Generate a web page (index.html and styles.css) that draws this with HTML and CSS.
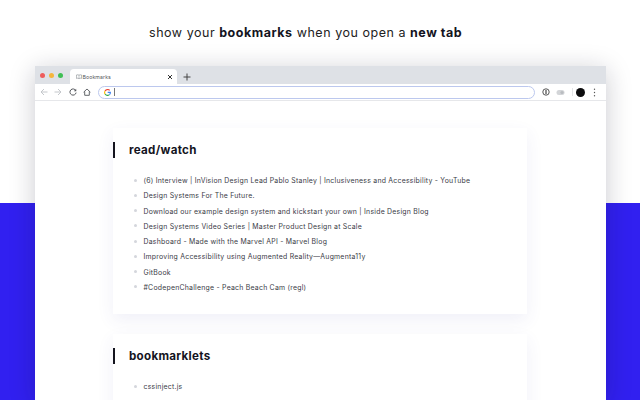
FILE: index.html
```html
<!DOCTYPE html>
<html lang="en">
<head>
<meta charset="utf-8">
<title>Bookmarks</title>
<link rel="stylesheet" href="styles.css">
</head>
<body>
<h1 class="headline">show your <b>bookmarks</b> when you open a <b>new tab</b></h1>
<div class="browser">
  <div class="tabstrip">
    <div class="lights"><i class="light red"></i><i class="light amber"></i><i class="light green"></i></div>
    <div class="tab">
      <svg class="tab-icon" viewBox="0 0 8 6" width="6" height="5"><path d="M.5 1c1-.4 2.400-.4 3.500.2C5.100.6 6.500.6 7.500 1v4.500C6.500 5.100 5.100 5.100 4 5.700 2.900 5.100 1.500 5.100.5 5.500z" fill="none" stroke="#80868b" stroke-width=".8"/><path d="M4 1.200v4.500" stroke="#80868b" stroke-width=".6"/></svg>
      <span class="tab-title">Bookmarks</span>
      <svg class="tab-close" viewBox="0 0 6 6" width="6" height="6"><path d="M1 1l4 4M5 1L1 5" stroke="#333" stroke-width="1"/></svg>
    </div>
    <svg class="new-tab" viewBox="0 0 8 8" width="8" height="8"><path d="M4 .5v7M.5 4h7" stroke="#444" stroke-width="1"/></svg>
  </div>
  <div class="toolbar">
    <svg class="tool" viewBox="0 0 8 8" width="8" height="8"><path d="M7.500 4H1M4 1L1 4l3 3" fill="none" stroke="#c4c7cb" stroke-width="1"/></svg>
    <svg class="tool" viewBox="0 0 8 8" width="8" height="8"><path d="M.5 4H7M4 1l3 3-3 3" fill="none" stroke="#c4c7cb" stroke-width="1"/></svg>
    <svg class="tool" viewBox="0 0 8 8" width="8" height="8"><path d="M6.800 2.600A3.100 3.100 0 1 0 7.100 4.600" fill="none" stroke="#55585c" stroke-width="1"/><path d="M7.200.8v2.400H4.800z" fill="#55585c"/></svg>
    <svg class="tool" viewBox="0 0 8 8" width="8" height="8"><path d="M.6 4.200L4 1l3.400 3.200M1.700 3.500v3.800h4.600V3.500" fill="none" stroke="#55585c" stroke-width=".9"/></svg>
    <div class="omnibox">
      <svg class="g" viewBox="0 0 8 8" width="7" height="7"><path d="M6.500 1.700A3.300 3.300 0 0 0 1.200 2.300" fill="none" stroke="#ea4335" stroke-width="1.300"/><path d="M1.200 2.300a3.300 3.300 0 0 0 0 3.400" fill="none" stroke="#fbbc05" stroke-width="1.300"/><path d="M1.200 5.700a3.300 3.300 0 0 0 5 .8" fill="none" stroke="#34a853" stroke-width="1.300"/><path d="M6.200 6.500A3.300 3.300 0 0 0 7.300 3.800H4.200" fill="none" stroke="#4285f4" stroke-width="1.300"/></svg>
      <i class="caret"></i>
    </div>
    <svg class="ext" viewBox="0 0 8 8" width="8" height="8"><circle cx="4" cy="4" r="3.200" fill="none" stroke="#444" stroke-width=".9"/><path d="M4 2v4" stroke="#444" stroke-width="1.200"/></svg>
    <svg class="ext-second" viewBox="0 0 9 7" width="9" height="7"><rect x=".5" y="1" width="8" height="5" rx="2.500" fill="#d3d5d8"/><circle cx="6" cy="3.500" r="1.600" fill="#b9bcc0"/></svg>
    <i class="divider"></i>
    <i class="avatar"></i>
    <svg class="menu" viewBox="0 0 3 9" width="3" height="9"><circle cx="1.500" cy="1.300" r=".7" fill="#555"/><circle cx="1.500" cy="4.500" r=".7" fill="#555"/><circle cx="1.500" cy="7.700" r=".7" fill="#555"/></svg>
  </div>
  <main class="page">
    <section class="card">
      <h2 class="card-title">read/watch</h2>
      <ul class="links">
        <li>(6) Interview | InVision Design Lead Pablo Stanley | Inclusiveness and Accessibility - YouTube</li>
        <li>Design Systems For The Future.</li>
        <li>Download our example design system and kickstart your own | Inside Design Blog</li>
        <li>Design Systems Video Series | Master Product Design at Scale</li>
        <li>Dashboard - Made with the Marvel API - Marvel Blog</li>
        <li>Improving Accessibility using Augmented Reality—Augmenta11y</li>
        <li>GitBook</li>
        <li>#CodepenChallenge - Peach Beach Cam (regl)</li>
      </ul>
    </section>
    <section class="card">
      <h2 class="card-title">bookmarklets</h2>
      <ul class="links">
        <li>cssinject.js</li>
      </ul>
    </section>
  </main>
</div>
</body>
</html>
```

FILE: styles.css
```css
* { box-sizing: border-box; }
html, body { height: 100%; }
body {
  margin: 0;
  height: 400px;
  overflow: hidden;
  display: flex;
  flex-direction: column;
  align-items: center;
  font-family: Inter, "Liberation Sans", sans-serif;
  color: #14141e;
  background: linear-gradient(#fff 0, #fff 203px, #3120f0 203px);
}
.headline {
  align-self: flex-start;
  margin: 24px 0 0;
  padding-left: 149px;
  height: 42px;
  line-height: 17px;
  font-size: 12.500px;
  font-weight: 400;
  letter-spacing: .53px;
  color: #222;
}
.headline b { font-weight: 700; color: #14141e; }
.browser {
  width: 571px;
  height: 334px;
  flex: none;
  display: flex;
  flex-direction: column;
  background: #fff;
  box-shadow: 0 4px 24px rgba(20, 20, 40, .22);
}
.tabstrip {
  height: 18px;
  flex: none;
  display: flex;
  align-items: flex-end;
  background: #dee1e6;
  padding-left: 5.500px;
}
.lights { display: flex; gap: 4px; align-self: center; margin-right: 6.500px; }
.light { width: 5px; height: 5px; border-radius: 50%; display: block; }
.red { background: #ee5c5c; }
.amber { background: #f5b63c; }
.green { background: #3fbf55; }
.tab {
  width: 107px;
  height: 15px;
  display: flex;
  align-items: center;
  padding: 0 4px 0 6px;
  background: #fff;
  border-radius: 4px 4px 0 0;
  gap: 1px;
}
.tab-title { flex: 1; font-size: 5.200px; color: #55585c; letter-spacing: .1px; }
.new-tab { margin: 0 0 3px 6px; }
.toolbar {
  height: 17px;
  flex: none;
  display: flex;
  align-items: center;
  padding-left: 5px;
  gap: 6.500px;
  border-bottom: 1px solid #e6e7ea;
  background: #fff;
}
.omnibox {
  width: 437px;
  height: 13px;
  display: flex;
  align-items: center;
  gap: 3px;
  padding-left: 5px;
  border: 1px solid #bcc8ee;
  border-radius: 7px;
}
.caret { width: 1px; height: 8px; background: #777; display: block; }
.ext { margin-left: .5px; }
.divider { width: 1px; height: 8px; background: #e3e4e6; display: block; }
.avatar { width: 9px; height: 9px; border-radius: 50%; background: #0c0c0e; display: block; margin-left: -3.500px; }
.menu { margin-left: 2px; }
.page {
  flex: 1;
  min-height: 0;
  overflow: hidden;
  padding: 27px 0 0 78px;
  display: flex;
  flex-direction: column;
  gap: 20px;
}
.card {
  width: 414px;
  flex: none;
  padding: 14px 0 19px;
  background: #fff;
  box-shadow: 0 6px 16px rgba(60, 70, 160, .08);
}
.card-title {
  margin: 0 0 15px;
  height: 16px;
  line-height: 16px;
  padding-left: 14.500px;
  border-left: 2px solid #14141e;
  font-size: 11.600px;
  font-weight: 700;
  letter-spacing: .3px;
  color: #14141e;
}
.links {
  margin: 0;
  padding: 0 0 0 21px;
  list-style: none;
}
.links li {
  height: 15.250px;
  line-height: 15px;
  font-size: 6.900px;
  letter-spacing: .24px;
  color: #3a3b46;
  white-space: nowrap;
}
.links li::before {
  content: "";
  display: inline-block;
  width: 3px;
  height: 3px;
  margin-right: 7px;
  vertical-align: 1.500px;
  border-radius: 50%;
  background: #d4d6dc;
}
```
